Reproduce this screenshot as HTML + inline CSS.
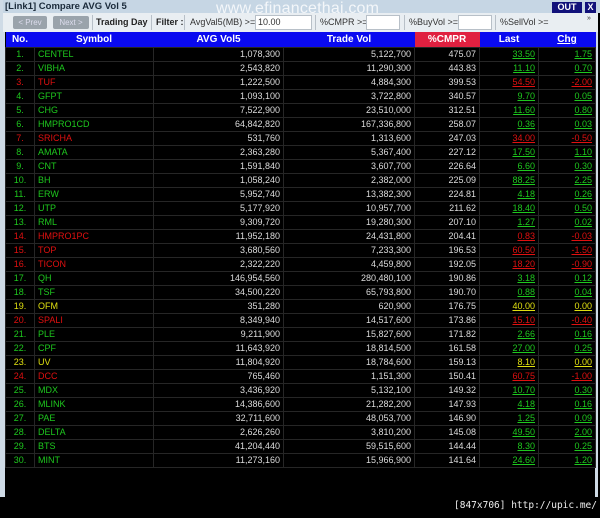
<!DOCTYPE html>
<html><head><style>
body{margin:0;width:600px;height:518px;background:#000;overflow:hidden;font-family:"Liberation Sans",Arial,sans-serif;position:relative}
.frame{position:absolute;left:0;top:0;width:598px;height:497px;background:#cfdbe6;}
.title{position:absolute;left:3px;top:0;height:13px;width:595px;background:#c6d6e4;font-size:9.5px;font-weight:bold;color:#1a2a3a;line-height:13px;padding-left:2px}
.wm{position:absolute;left:216px;top:0px;font-size:16px;color:rgba(255,255,255,.8);letter-spacing:0.2px}
.out{position:absolute;left:552px;top:2px;width:30px;height:11px;background:#11117a;color:#fff;font-size:9px;font-weight:bold;text-align:center;line-height:11px}
.x{position:absolute;left:585px;top:2px;width:11px;height:11px;background:#11117a;color:#fff;font-size:9px;font-weight:bold;text-align:center;line-height:11px}
.tb{position:absolute;left:3px;top:13px;width:595px;height:19px;background:#e9eef2;font-size:9px;color:#333}
.tb span{position:absolute;top:0;line-height:19px}
.btn{position:absolute;top:3px;height:13px;background:#9aa3ab;color:#dde;font-size:8px;line-height:13px;text-align:center;border-radius:2px}
.inp{position:absolute;top:2px;height:15px;background:#fff;border:1px solid #b8c0c8;box-sizing:border-box;font-size:9px;line-height:13px;padding-left:2px}
.sep{position:absolute;top:2px;width:1px;height:15px;background:#b8c0c8}
.tbl{position:absolute;left:5px;top:32px;width:590px;height:465px;background:#000}
table{border-collapse:collapse;table-layout:fixed;width:590px;font-size:9px}
th{background:#0a0af0;color:#fff;height:15px;padding:0;font-size:10px}
th.c{background:#e02040}
td{height:13px;padding:0 3px;border:1px solid #262626;color:#dcdcdc;text-align:right;line-height:13px;white-space:nowrap}
td.n{text-align:center}td.s{text-align:left}
.g td.n,.g td.s{color:#1ec81e}.r td.n,.r td.s{color:#e01010}.y td.n,.y td.s{color:#e0e010}
td u{color:inherit}
.g td.l{color:#1ec81e}.r td.l{color:#e01010}.y td.l{color:#e0e010}
.foot{position:absolute;right:3px;top:500px;color:#eee;font-size:9.5px;font-family:"DejaVu Sans Mono",monospace}
</style></head><body>
<div class="frame"></div>
<div class="title">[Link1] Compare AVG Vol 5</div>
<div class="wm">www.efinancethai.com</div>
<div class="out">OUT</div><div class="x">X</div>
<div class="tb">
<div class="btn" style="left:10px;width:34px">&lt; Prev</div>
<div class="btn" style="left:50px;width:36px">Next &gt;</div>
<div class="sep" style="left:89px"></div>
<span style="left:93px;font-weight:bold;color:#222">Trading Day</span>
<div class="sep" style="left:148px"></div>
<span style="left:153px;font-weight:bold;color:#222">Filter :</span>
<div class="sep" style="left:181px"></div>
<span style="left:187px">AvgVal5(MB) &gt;=</span>
<div class="inp" style="left:252px;width:57px">10.00</div>
<div class="sep" style="left:312px"></div>
<span style="left:317px">%CMPR &gt;=</span>
<div class="inp" style="left:363px;width:34px"></div>
<div class="sep" style="left:401px"></div>
<span style="left:406px">%BuyVol &gt;=</span>
<div class="inp" style="left:455px;width:34px"></div>
<div class="sep" style="left:492px"></div>
<span style="left:497px">%SellVol &gt;=</span>
<span style="left:584px;font-size:7px;line-height:12px">»</span>
</div>
<div class="tbl"><table>
<colgroup><col style="width:29px"><col style="width:119px"><col style="width:130px"><col style="width:131px"><col style="width:65px"><col style="width:59px"><col style="width:57px"></colgroup>
<tr><th>No.</th><th>Symbol</th><th>AVG Vol5</th><th>Trade Vol</th><th class="c">%CMPR</th><th>Last</th><th><u>Chg</u></th></tr>
<tr class="g"><td class="n">1.</td><td class="s">CENTEL</td><td>1,078,300</td><td>5,122,700</td><td>475.07</td><td class="l"><u>33.50</u></td><td class="l"><u>1.75</u></td></tr>
<tr class="g"><td class="n">2.</td><td class="s">VIBHA</td><td>2,543,820</td><td>11,290,300</td><td>443.83</td><td class="l"><u>11.10</u></td><td class="l"><u>0.70</u></td></tr>
<tr class="r"><td class="n">3.</td><td class="s">TUF</td><td>1,222,500</td><td>4,884,300</td><td>399.53</td><td class="l"><u>54.50</u></td><td class="l"><u>-2.00</u></td></tr>
<tr class="g"><td class="n">4.</td><td class="s">GFPT</td><td>1,093,100</td><td>3,722,800</td><td>340.57</td><td class="l"><u>9.70</u></td><td class="l"><u>0.05</u></td></tr>
<tr class="g"><td class="n">5.</td><td class="s">CHG</td><td>7,522,900</td><td>23,510,000</td><td>312.51</td><td class="l"><u>11.60</u></td><td class="l"><u>0.80</u></td></tr>
<tr class="g"><td class="n">6.</td><td class="s">HMPRO1CD</td><td>64,842,820</td><td>167,336,800</td><td>258.07</td><td class="l"><u>0.36</u></td><td class="l"><u>0.03</u></td></tr>
<tr class="r"><td class="n">7.</td><td class="s">SRICHA</td><td>531,760</td><td>1,313,600</td><td>247.03</td><td class="l"><u>34.00</u></td><td class="l"><u>-0.50</u></td></tr>
<tr class="g"><td class="n">8.</td><td class="s">AMATA</td><td>2,363,280</td><td>5,367,400</td><td>227.12</td><td class="l"><u>17.50</u></td><td class="l"><u>1.10</u></td></tr>
<tr class="g"><td class="n">9.</td><td class="s">CNT</td><td>1,591,840</td><td>3,607,700</td><td>226.64</td><td class="l"><u>6.60</u></td><td class="l"><u>0.30</u></td></tr>
<tr class="g"><td class="n">10.</td><td class="s">BH</td><td>1,058,240</td><td>2,382,000</td><td>225.09</td><td class="l"><u>88.25</u></td><td class="l"><u>2.25</u></td></tr>
<tr class="g"><td class="n">11.</td><td class="s">ERW</td><td>5,952,740</td><td>13,382,300</td><td>224.81</td><td class="l"><u>4.18</u></td><td class="l"><u>0.26</u></td></tr>
<tr class="g"><td class="n">12.</td><td class="s">UTP</td><td>5,177,920</td><td>10,957,700</td><td>211.62</td><td class="l"><u>18.40</u></td><td class="l"><u>0.50</u></td></tr>
<tr class="g"><td class="n">13.</td><td class="s">RML</td><td>9,309,720</td><td>19,280,300</td><td>207.10</td><td class="l"><u>1.27</u></td><td class="l"><u>0.02</u></td></tr>
<tr class="r"><td class="n">14.</td><td class="s">HMPRO1PC</td><td>11,952,180</td><td>24,431,800</td><td>204.41</td><td class="l"><u>0.83</u></td><td class="l"><u>-0.03</u></td></tr>
<tr class="r"><td class="n">15.</td><td class="s">TOP</td><td>3,680,560</td><td>7,233,300</td><td>196.53</td><td class="l"><u>60.50</u></td><td class="l"><u>-1.50</u></td></tr>
<tr class="r"><td class="n">16.</td><td class="s">TICON</td><td>2,322,220</td><td>4,459,800</td><td>192.05</td><td class="l"><u>18.20</u></td><td class="l"><u>-0.90</u></td></tr>
<tr class="g"><td class="n">17.</td><td class="s">QH</td><td>146,954,560</td><td>280,480,100</td><td>190.86</td><td class="l"><u>3.18</u></td><td class="l"><u>0.12</u></td></tr>
<tr class="g"><td class="n">18.</td><td class="s">TSF</td><td>34,500,220</td><td>65,793,800</td><td>190.70</td><td class="l"><u>0.88</u></td><td class="l"><u>0.04</u></td></tr>
<tr class="y"><td class="n">19.</td><td class="s">OFM</td><td>351,280</td><td>620,900</td><td>176.75</td><td class="l"><u>40.00</u></td><td class="l"><u>0.00</u></td></tr>
<tr class="r"><td class="n">20.</td><td class="s">SPALI</td><td>8,349,940</td><td>14,517,600</td><td>173.86</td><td class="l"><u>15.10</u></td><td class="l"><u>-0.40</u></td></tr>
<tr class="g"><td class="n">21.</td><td class="s">PLE</td><td>9,211,900</td><td>15,827,600</td><td>171.82</td><td class="l"><u>2.66</u></td><td class="l"><u>0.16</u></td></tr>
<tr class="g"><td class="n">22.</td><td class="s">CPF</td><td>11,643,920</td><td>18,814,500</td><td>161.58</td><td class="l"><u>27.00</u></td><td class="l"><u>0.25</u></td></tr>
<tr class="y"><td class="n">23.</td><td class="s">UV</td><td>11,804,920</td><td>18,784,600</td><td>159.13</td><td class="l"><u>8.10</u></td><td class="l"><u>0.00</u></td></tr>
<tr class="r"><td class="n">24.</td><td class="s">DCC</td><td>765,460</td><td>1,151,300</td><td>150.41</td><td class="l"><u>60.75</u></td><td class="l"><u>-1.00</u></td></tr>
<tr class="g"><td class="n">25.</td><td class="s">MDX</td><td>3,436,920</td><td>5,132,100</td><td>149.32</td><td class="l"><u>10.70</u></td><td class="l"><u>0.30</u></td></tr>
<tr class="g"><td class="n">26.</td><td class="s">MLINK</td><td>14,386,600</td><td>21,282,200</td><td>147.93</td><td class="l"><u>4.18</u></td><td class="l"><u>0.16</u></td></tr>
<tr class="g"><td class="n">27.</td><td class="s">PAE</td><td>32,711,600</td><td>48,053,700</td><td>146.90</td><td class="l"><u>1.25</u></td><td class="l"><u>0.09</u></td></tr>
<tr class="g"><td class="n">28.</td><td class="s">DELTA</td><td>2,626,260</td><td>3,810,200</td><td>145.08</td><td class="l"><u>49.50</u></td><td class="l"><u>2.00</u></td></tr>
<tr class="g"><td class="n">29.</td><td class="s">BTS</td><td>41,204,440</td><td>59,515,600</td><td>144.44</td><td class="l"><u>8.30</u></td><td class="l"><u>0.25</u></td></tr>
<tr class="g"><td class="n">30.</td><td class="s">MINT</td><td>11,273,160</td><td>15,966,900</td><td>141.64</td><td class="l"><u>24.60</u></td><td class="l"><u>1.20</u></td></tr>
</table></div>
<div class="foot">[847x706] http://upic.me/</div>
</body></html>
